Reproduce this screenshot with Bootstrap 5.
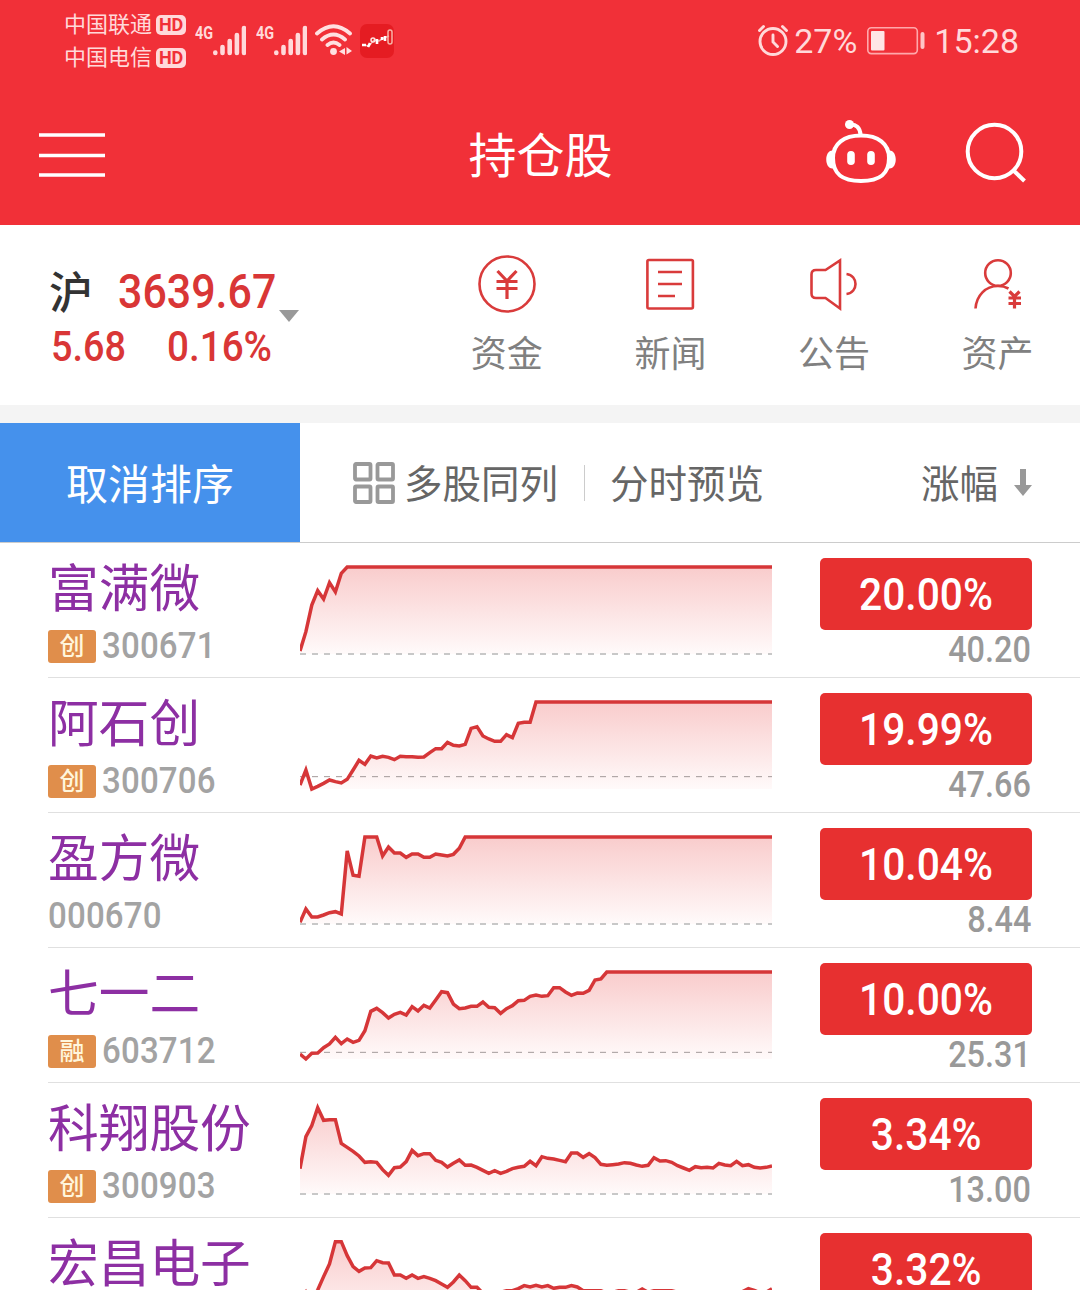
<!DOCTYPE html>
<html lang="zh-CN">
<head>
<meta charset="utf-8">
<meta name="viewport" content="width=device-width, initial-scale=1">
<title>持仓股</title>
<link href="https://cdn.jsdelivr.net/npm/bootstrap@5.3.0/dist/css/bootstrap.min.css" rel="stylesheet">
<style>
body{font-family:Roboto,"Noto Sans CJK SC",sans-serif;background:#fff;width:1080px;height:1290px;overflow:hidden;line-height:1}
svg{display:block;flex:none}
.top-area{background:#f13038;height:225px;color:#fff}
.status-line{height:84px;padding:0 63px 0 64px;color:#ffd9da}
.carriers{width:122px;font-size:22px;line-height:33px;padding-top:8px}
.hd-tag{width:30px;height:20px;border-radius:5px;background:#ffd9da;color:#f13038;font:700 18px/20px Roboto,sans-serif;text-align:center;letter-spacing:-.2px}
.signal-box{margin-left:9px;padding-top:24px}
.net-tag{font:700 18px/17px Roboto,sans-serif;width:18px}
.net-tag span{display:inline-block;transform:scaleX(.8);transform-origin:left}
.clock-text{font-size:34px;line-height:40px;margin-top:-2px}
.title-line{height:141px;padding:0 53px 0 39px}
.title-line>.side-box{flex:1 1 0}
.head-icons{margin-top:-6px}
.page-title{font-size:48px;line-height:60px;font-weight:400;margin:4px 0 0 15px}
.index-area{height:180px}
.index-left{width:425px;padding:41px 0 0 49px}
.num{display:inline-block;transform-origin:left center;white-space:nowrap}
.idx-name{font-size:44px;line-height:56px;height:50px;color:#333;width:69px;font-weight:500}
.idx-val{font-weight:500;font-size:48.5px;line-height:52px;transform:scaleX(.885);width:161px;color:#d93636}
.idx-sub{font-weight:500;font-size:42px;line-height:50px;transform:scaleX(.9);color:#d93636}
.idx-arrow{margin-top:44px}
.tool-item{width:163.6px;font-size:36px;color:#808080;padding-top:29px}
.tool-item div{line-height:50px;margin-top:16px}
.red-ico{fill:none;stroke:#d93b3b;stroke-width:2.6}
.red-ico .bold-line{stroke-width:3.2}
.gap-band{height:18px;background:#f4f4f4}
.sort-bar{height:120px;border-bottom:1px solid #ccc;font-size:38.5px;color:#666}
.sort-bar>span{padding-top:5px}
.sort-cancel{width:300px;height:119px;background:#4591ec;color:#fff;font-size:42px;padding-top:6px}
.stock-row{height:135px;margin-left:48px;border-bottom:1px solid #e0e0e0}
.stock-left{width:252px;padding-top:14px}
.stock-name{font-size:50.7px;line-height:66px;color:#8d2fa3;white-space:nowrap}
.code-line{height:36px;margin-top:5px;font-size:36.5px;line-height:36px;color:#a3a3a3}
.code-line .num{transform:scaleX(.905);letter-spacing:.2px;font-weight:500}
.mkt-tag{width:48px;height:33px;border-radius:3px;background:#e08e4b;color:#fff6dc;font-size:25px;line-height:34px;font-weight:500;text-align:center;margin-right:6px}
.stock-right{width:212px;margin-left:48px;padding-top:15px}
.pct-pill{height:72px;border-radius:5px;background:#e73030;color:#fff;font-weight:500;font-size:45px}
.pct-pill .num{transform:scaleX(.905);transform-origin:center}
.price-text{font-size:36px;line-height:41px;color:#999;text-align:right;padding-right:1px}
.price-text .num{transform:scaleX(.9);transform-origin:right;font-weight:500}
.spark polyline{fill:none;stroke:#d63638;stroke-width:10.5;stroke-linejoin:miter}
.spark .base{stroke:#c8c8c8;stroke-width:6;stroke-dasharray:18 18}
.spark .base.thin{stroke:#a39a9a;stroke-width:3}
</style>
</head>
<body>
<header class="top-area">
  <div class="status-line d-flex">
    <div class="carriers">
      <div class="d-flex align-items-center justify-content-between"><span>中国联通</span><span class="hd-tag">HD</span></div>
      <div class="d-flex align-items-center justify-content-between"><span>中国电信</span><span class="hd-tag">HD</span></div>
    </div>
    <div class="d-flex signal-box">
      <span class="net-tag"><span>4G</span></span>
      <svg width="33" height="32" viewBox="0 0 33 32" stroke="#ffd9da" stroke-width="4.6" stroke-linecap="round"><path d="M2.300 29v-.5M9.500 29v-6M16.700 29v-12M23.900 29v-18M31 29v-25"/></svg>
    </div>
    <div class="d-flex signal-box" style="margin-left:10px">
      <span class="net-tag"><span>4G</span></span>
      <svg width="33" height="32" viewBox="0 0 33 32" stroke="#ffd9da" stroke-width="4.6" stroke-linecap="round"><path d="M2.300 29v-.5M9.500 29v-6M16.700 29v-12M23.900 29v-18M31 29v-25"/></svg>
    </div>
    <svg class="mt-4" style="margin-left:8px" width="38" height="32" viewBox="0 0 38 32" fill="none" stroke="#ffe0e1" stroke-width="3.8" stroke-linecap="round"><path d="M2 9.500Q18.500-5 35 9.500M7 15.500Q18.500 5.500 30 15.500M12.500 21Q18.500 16 24.500 21"/><g fill="#ffe0e1" stroke="none"><circle cx="18.500" cy="27.500" r="3.400"/><path d="M30 24v7l-6-3.500zM31.500 23v7.500l5.500-3.500z"/></g></svg>
    <svg style="margin:24px 0 0 7px" width="34" height="34" viewBox="0 0 34 34" fill="none"><rect width="34" height="34" rx="7" fill="#e51c22"/><path d="M3 21l6 1 5-6 5 1 5-3 5-2" stroke="#f4a7a2" stroke-width="1.500"/><path d="M2 21h4M8 23l2-4M17 15v5M22 13v3M25 12v5" stroke="#fff" stroke-width="2.600"/><circle cx="13" cy="16" r="2" stroke="#ffe2df" stroke-width="1.500"/><rect x="28" y="6" width="4" height="14" rx="2" stroke="#f7b4a8" stroke-width="1.500"/></svg>
    <div class="d-flex ms-auto align-items-center">
      <svg style="margin-top:-4px" width="32" height="34" viewBox="0 0 32 34" fill="none" stroke="#ffd9da" stroke-width="2.900" stroke-linecap="round"><circle cx="16" cy="18.500" r="13"/><path d="M2.500 7.500l4-4M29.500 7.500l-4-4M16 12v7l4.500 4.500"/></svg>
      <span class="clock-text" style="margin-left:5px;margin-right:10px">27%</span>
      <svg style="margin-top:-2px" width="58" height="28" viewBox="0 0 58 28"><rect x=".8" y=".8" width="49.500" height="25.800" rx="3.500" fill="none" stroke="#ffa8ab" stroke-width="1.600"/><rect x="4" y="4" width="13.500" height="19.500" rx="1" fill="#ffe6e6"/><rect x="53.500" y="5" width="4" height="17" rx="2" fill="#ffc4c6"/></svg>
      <span class="clock-text" style="margin-left:9px;margin-right:-2px">15:28</span>
    </div>
  </div>
  <div class="title-line d-flex align-items-center">
    <div class="side-box"><svg width="66" height="46" viewBox="0 0 66 46" stroke="#fff" stroke-width="3.600"><path d="M0 3h66M0 23.500h66M0 43h66"/></svg></div>
    <h1 class="page-title">持仓股</h1>
    <div class="side-box head-icons d-flex justify-content-end">
      <svg width="70" height="64" viewBox="826 120 70 64" fill="none" stroke="#fff" stroke-width="4"><path d="M861 135.500c17 0 28 8 28 22.500 0 16-9 23-28 23s-28-7-28-23c0-14.500 11-22.500 28-22.500z"/><path d="M850 124.500c6-.5 10 3 10.500 10"/><g fill="#fff" stroke="none"><circle cx="849.500" cy="124.500" r="4.500"/><path d="M833 150.500c-9-1-9 19 0 18zM889 150.500c9-1 9 19 0 18z"/><rect x="847.200" y="151" width="7.600" height="14" rx="3.800"/><rect x="867.200" y="151" width="7.600" height="14" rx="3.800"/></g></svg>
      <svg style="margin-left:69px" width="62" height="64" viewBox="965 120 62 64" fill="none" stroke="#fff" stroke-width="4"><circle cx="994.500" cy="151.500" r="26.800"/><path d="M1013 170l11.500 11"/></svg>
    </div>
  </div>
</header>
<section class="index-area d-flex">
  <div class="index-left">
    <div class="d-flex"><span class="idx-name">沪</span><span class="num idx-val">3639.67</span><svg class="idx-arrow" width="20" height="12" viewBox="0 0 20 12"><path d="M0 0h20L10 12z" fill="#999"/></svg></div>
    <div class="d-flex" style="margin:0 0 0 2px"><span class="num idx-sub" style="width:116px">5.68</span><span class="num idx-sub" style="transform:scaleX(.92)">0.16%</span></div>
  </div>
  <div class="tool-item d-flex flex-column align-items-center"><svg class="red-ico" width="60" height="60" viewBox="477 254 60 60"><circle cx="507" cy="284" r="27.500"/><path class="bold-line" d="M497.500 271l9.500 10 9.500-10M507 281v18M496.500 281.500h21M496.500 288.500h21"/></svg><div>资金</div></div>
  <div class="tool-item d-flex flex-column align-items-center"><svg class="red-ico" width="60" height="60" viewBox="640 254 60 60"><rect x="647.400" y="260" width="45.500" height="48.500" rx="1.500"/><path d="M658 272h24M658 284h24M658 296h17"/></svg><div>新闻</div></div>
  <div class="tool-item d-flex flex-column align-items-center"><svg class="red-ico" width="60" height="60" viewBox="804 254 60 60"><path d="M840 260.500v48L825.500 298H816q-4.500 0-4.500-4.500v-19q0-4.500 4.500-4.500h9.500zM846.500 274c12 1.500 12 18.500 0 20"/></svg><div>公告</div></div>
  <div class="tool-item d-flex flex-column align-items-center"><svg class="red-ico" width="60" height="60" viewBox="968 254 60 60"><circle cx="998" cy="273" r="12.800"/><path d="M975.500 308.500c1-13 10-22.500 22.500-22.500q6 0 10.500 2.500"/><path class="bold-line" d="M1009.500 291.500l5 5 5-5M1014.500 296.500v12M1008.500 298h12.500M1008.500 303.500h12.500"/></svg><div>资产</div></div>
</section>
<div class="gap-band"></div>
<nav class="sort-bar d-flex align-items-center">
  <div class="sort-cancel d-flex align-items-center justify-content-center">取消排序</div>
  <svg style="margin-left:53px" width="42" height="42" viewBox="0 0 42 42" fill="none" stroke="#999" stroke-width="3.800"><rect x="2" y="2" width="15.500" height="15.500" rx="1"/><rect x="24.500" y="2" width="15.500" height="15.500" rx="1"/><rect x="2" y="24.500" width="15.500" height="15.500" rx="1"/><rect x="24.500" y="24.500" width="15.500" height="15.500" rx="1"/></svg>
  <span style="margin-left:9px">多股同列</span>
  <svg style="margin:0 25px 0 26px" width="1" height="36"><rect width="1" height="36" fill="#ccc"/></svg>
  <span>分时预览</span>
  <span class="ms-auto">涨幅</span>
  <svg style="margin:0 48px 0 16px" width="18" height="27" viewBox="0 0 18 27"><path d="M6 0h6v16h6l-9 11L0 16h6z" fill="#999"/></svg>
</nav>
<main>
  <div class="stock-row d-flex">
    <div class="stock-left"><div class="stock-name">富满微</div><div class="code-line d-flex align-items-center"><span class="mkt-tag">创</span><span class="num">300671</span></div></div>
    <svg class="spark" width="472" height="134" viewBox="0 -21 1416 402" data-base="312" data-bottom="312" data-top="51" data-y="303 245 165 122 147 98 126 70 51"></svg>
    <div class="stock-right"><div class="pct-pill d-flex align-items-center justify-content-center"><span class="num">20.00%</span></div><div class="price-text"><span class="num">40.20</span></div></div>
  </div>
  <div class="stock-row d-flex">
    <div class="stock-left"><div class="stock-name">阿石创</div><div class="code-line d-flex align-items-center"><span class="mkt-tag">创</span><span class="num">300706</span></div></div>
    <svg class="spark" width="472" height="134" viewBox="0 384 1416 402" data-base="680" data-bottom="717" data-top="456" data-y="705 660 717 709 700 690 695 699 688 660 631 643 618 624 619 622 629 619 620 620 622 621 608 596 596 577 586 588 583 535 530 558 567 574 574 554 563 520 517 517 456"></svg>
    <div class="stock-right"><div class="pct-pill d-flex align-items-center justify-content-center"><span class="num">19.99%</span></div><div class="price-text"><span class="num">47.66</span></div></div>
  </div>
  <div class="stock-row d-flex">
    <div class="stock-left"><div class="stock-name">盈方微</div><div class="code-line d-flex align-items-center"><span class="num">000670</span></div></div>
    <svg class="spark" width="472" height="134" viewBox="0 -21 1416 402" data-base="312" data-bottom="312" data-top="51" data-y="307 267 291 291 285 278 275 282 93 166 169 51 51 51 108 81 99 99 112 102 102 112 112 102 105 108 103 85 51"></svg>
    <div class="stock-right"><div class="pct-pill d-flex align-items-center justify-content-center"><span class="num">10.04%</span></div><div class="price-text"><span class="num">8.44</span></div></div>
  </div>
  <div class="stock-row d-flex">
    <div class="stock-left"><div class="stock-name">七一二</div><div class="code-line d-flex align-items-center"><span class="mkt-tag">融</span><span class="num">603712</span></div></div>
    <svg class="spark" width="472" height="134" viewBox="0 384 1416 402" data-base="697" data-bottom="717" data-top="456" data-y="702 717 700 699 683 672 652 671 657 667 661 632 574 565 578 594 583 577 585 560 573 556 564 540 515 518 552 566 564 559 559 546 562 563 580 566 557 542 541 529 525 529 527 503 503 516 526 519 520 511 480 477 456"></svg>
    <div class="stock-right"><div class="pct-pill d-flex align-items-center justify-content-center"><span class="num">10.00%</span></div><div class="price-text"><span class="num">25.31</span></div></div>
  </div>
  <div class="stock-row d-flex">
    <div class="stock-left"><div class="stock-name">科翔股份</div><div class="code-line d-flex align-items-center"><span class="mkt-tag">创</span><span class="num">300903</span></div></div>
    <svg class="spark" width="472" height="134" viewBox="0 -6 1416 402" data-base="327" data-bottom="327" data-top="66" data-y="251 155 122 68 106 104 104 175 187 199 213 232 230 232 254 271 248 246 230 196 212 206 206 226 232 246 235 225 241 240 247 256 265 257 265 259 251 247 244 229 242 215 220 222 226 230 204 204 217 206 218 238 241 239 237 233 235 240 244 241 218 228 227 232 242 249 256 245 248 247 249 235 240 242 229 242 239 247 249 247 243"></svg>
    <div class="stock-right"><div class="pct-pill d-flex align-items-center justify-content-center"><span class="num">3.34%</span></div><div class="price-text"><span class="num">13.00</span></div></div>
  </div>
  <div class="stock-row d-flex">
    <div class="stock-left"><div class="stock-name">宏昌电子</div></div>
    <svg class="spark" width="472" height="134" viewBox="0 399 1416 402" data-base="700" data-bottom="732" data-top="470" data-y="645 621 652 615 575 537 470 470 512 545 559 549 548 527 533 534 570 570 580 570 580 575 580 587 597 607 591 570 587 607 607 625 625 625 622 617 617 611 602 606 601 606 602 610 607 607 602 606 617 617 617 617 625 622 617 617 622 622 612 622 617 617 617 617 622 622 624 624 624 622 624 624 622 624 622 620 611 616 624 622 611"></svg>
    <div class="stock-right"><div class="pct-pill d-flex align-items-center justify-content-center"><span class="num">3.32%</span></div></div>
  </div>
</main>
<script src="https://cdn.jsdelivr.net/npm/bootstrap@5.3.0/dist/js/bootstrap.bundle.min.js"></script>
<script>
// Intraday sparkline: 81 samples, the last price held to the close when samples run out
document.querySelectorAll('.spark').forEach(function (svg, i) {
  var d = svg.dataset, ys = d.y.split(' ').map(Number);
  while (ys.length < 81) ys.push(ys[ys.length - 1]);
  var pts = ys.map(function (y, k) { return (k * 17.7).toFixed(1) + ',' + y; }).join(' ');
  svg.innerHTML =
    '<defs><linearGradient id="fade' + i + '" gradientUnits="userSpaceOnUse" x1="0" x2="0" y1="' + d.top + '" y2="' + d.bottom + '">' +
    '<stop offset="0" stop-color="#f9cccc"/><stop offset="1" stop-color="#fffafa"/></linearGradient></defs>' +
    '<polygon fill="url(#fade' + i + ')" points="0,' + d.bottom + ' ' + pts + ' 1416,' + d.bottom + '"/>' +
    '<path class="base' + (d.base === d.bottom ? '' : ' thin') + '" d="M0 ' + d.base + 'H1416"/>' +
    '<polyline points="' + pts + '"/>';
});
</script>
</body>
</html>
